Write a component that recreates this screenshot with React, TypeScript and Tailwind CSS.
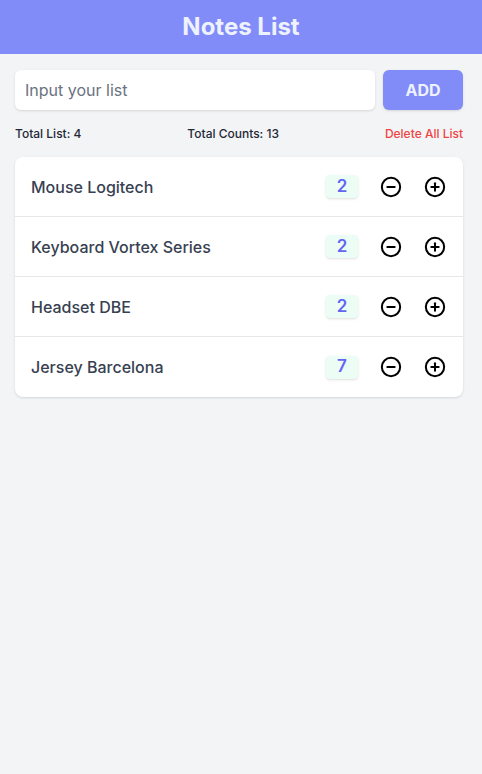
import { CircleMinus, CirclePlus } from "lucide-react";

const items = [
  { name: "Mouse Logitech", count: 2 },
  { name: "Keyboard Vortex Series", count: 2 },
  { name: "Headset DBE", count: 2 },
  { name: "Jersey Barcelona", count: 7 },
];

export default function App() {
  const total = items.reduce((s, i) => s + i.count, 0);
  return (
    <div className="min-h-screen bg-[#f3f4f6] font-['Inter',sans-serif]">
      <header className="h-[54px] bg-[#818cf8] flex items-center justify-center">
        <h1 className="text-2xl font-bold text-[#eef2ff]">Notes List</h1>
      </header>

      <div className="pl-[15px] pr-[19px] pt-4">
        <div className="flex gap-2">
          <input
            placeholder="Input your list"
            className="flex-1 h-10 rounded-md bg-white px-[10px] text-base text-[#374151] placeholder:text-[#6b7280] shadow-sm outline-none"
          />
          <button className="w-20 h-10 rounded-md bg-[#818cf8] text-[#eef2ff] font-bold shadow-sm">ADD</button>
        </div>

        <div className="flex justify-between items-center mt-4 text-xs font-medium text-[#1f2937]">
          <span>Total List: {items.length}</span>
          <span>Total Counts: {total}</span>
          <span className="text-[#ef4444]">Delete All List</span>
        </div>

        <ul className="mt-[15px] bg-white rounded-lg shadow divide-y divide-[#e5e7eb]">
          {items.map((it) => (
            <li key={it.name} className="h-[60px] flex items-center pl-4 pr-[17px]">
              <span className="flex-1 text-base font-medium text-[#374151]">{it.name}</span>
              <span className="w-8 h-[23px] flex items-center justify-center bg-[#ecfdf5] rounded-sm shadow-sm text-[17px] font-semibold text-[#6366f1]">
                {it.count}
              </span>
              <button className="ml-[22px] text-black">
                <CircleMinus size={22} strokeWidth={2.2} />
              </button>
              <button className="ml-[22px] text-black">
                <CirclePlus size={22} strokeWidth={2.2} />
              </button>
            </li>
          ))}
        </ul>
      </div>
    </div>
  );
}
